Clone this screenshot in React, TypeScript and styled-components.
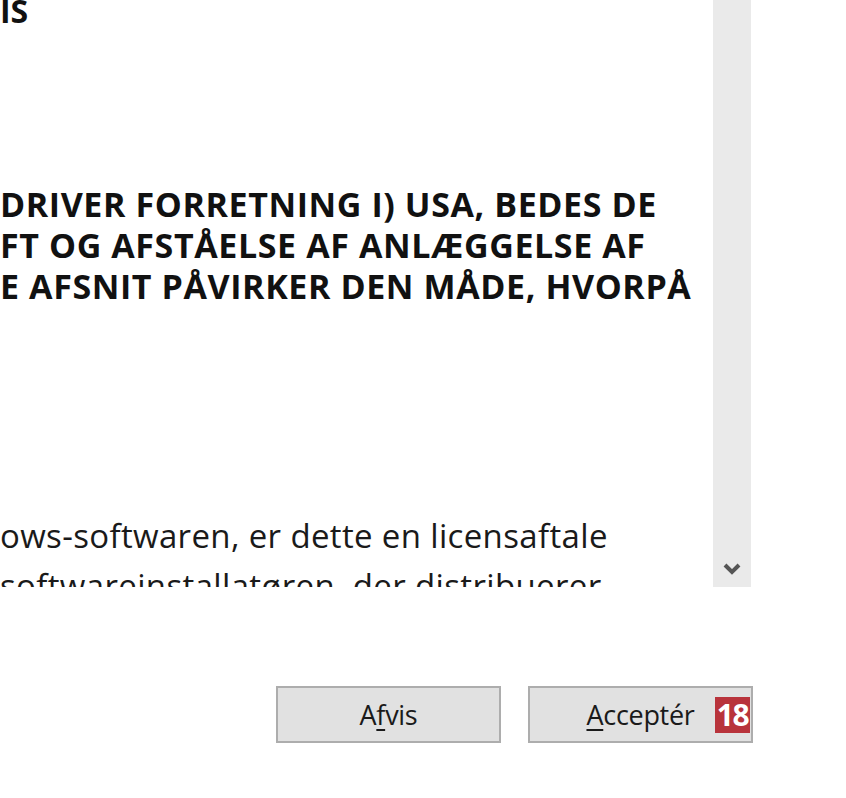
import styled, { createGlobalStyle } from "styled-components";

const GlobalStyle = createGlobalStyle`
	html, body {
		margin: 0;
		padding: 0;
		background: #ffffff;
	}
	body {
		font-family: "Open Sans", "Noto Sans", sans-serif;
		color: #111111;
		overflow: hidden;
	}
`;

const Page = styled.div`
	width: 846px;
	height: 798px;
	display: flex;
	flex-direction: column;
	overflow: hidden;
`;

const Upper = styled.div`
	display: flex;
	height: 587px;
`;

const LicenseText = styled.div`
	width: 713px;
	height: 587px;
	overflow: hidden;
	display: flex;
	flex-direction: column;
`;

const Heading = styled.div`
	font-weight: 700;
	font-size: 32px;
	line-height: 41px;
	margin-top: -10px;
	white-space: nowrap;
`;

const BoldBlock = styled.div`
	margin-top: 153px;
	font-weight: 700;
	font-size: 34px;
	letter-spacing: 0.6px;
	line-height: 41px;
	white-space: nowrap;
`;

const PlainBlock = styled.div`
	margin-top: 204px;
	font-weight: 400;
	font-size: 33px;
	letter-spacing: 0.35px;
	line-height: 50px;
	white-space: nowrap;
	color: #1a1a1a;
`;

const Scrollbar = styled.div`
	width: 38px;
	height: 587px;
	background: #eaeaea;
	display: flex;
	flex-direction: column;
	justify-content: flex-end;
	align-items: center;
	padding-bottom: 11px;
	box-sizing: border-box;
`;

const Footer = styled.div`
	display: flex;
	justify-content: flex-end;
	gap: 27px;
	padding: 99px 93px 0 0;
`;

const Button = styled.button`
	position: relative;
	width: 225px;
	height: 57px;
	box-sizing: border-box;
	background: #e1e1e1;
	border: 2px solid #adadad;
	font-family: "Open Sans", "Noto Sans", sans-serif;
	font-size: 27px;
	letter-spacing: -0.3px;
	color: #1a1a1a;
	padding: 0;
	display: flex;
	align-items: center;
	justify-content: center;
	cursor: pointer;
`;

const Badge = styled.span`
	position: absolute;
	right: 1px;
	top: 9px;
	width: 35px;
	height: 36px;
	background: #b8333b;
	color: #ffffff;
	font-family: "Open Sans", "Noto Sans", sans-serif;
	font-weight: 700;
	font-size: 30px;
	line-height: 36px;
	text-align: center;
	letter-spacing: -1.5px;
`;

const Key = styled.u`
	text-underline-offset: 4px;
	text-decoration-thickness: 2px;
`;

export default function App() {
	return (
		<>
			<GlobalStyle />
			<Page>
				<Upper>
					<LicenseText>
						<Heading>IS</Heading>
						<BoldBlock>
							<div>DRIVER FORRETNING I) USA, BEDES DE</div>
							<div>FT OG AFSTÅELSE AF ANLÆGGELSE AF</div>
							<div>E AFSNIT PÅVIRKER DEN MÅDE, HVORPÅ</div>
						</BoldBlock>
						<PlainBlock>
							<div>ows-softwaren, er dette en licensaftale</div>
							<div>softwareinstallatøren, der distribuerer</div>
						</PlainBlock>
					</LicenseText>
					<Scrollbar>
						<svg width="18" height="14" viewBox="0 0 18 14">
							<path d="M2 3 L9 10 L16 3" fill="none" stroke="#555555" strokeWidth="4" />
						</svg>
					</Scrollbar>
				</Upper>
				<Footer>
					<Button>
						A<Key>f</Key>vis
					</Button>
					<Button>
						<Key>A</Key>cceptér
						<Badge>18</Badge>
					</Button>
				</Footer>
			</Page>
		</>
	);
}
